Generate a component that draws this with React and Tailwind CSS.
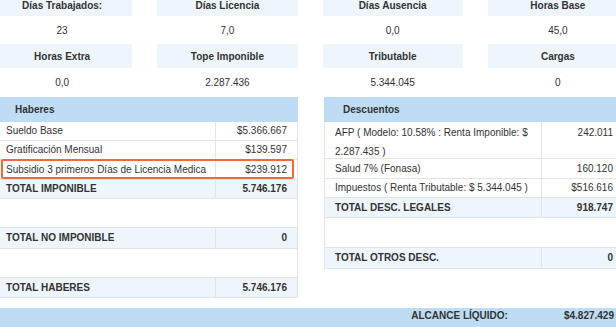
import React from "react";

const topCells = [
  [
    ["Días Trabajados:", "23"],
    ["Días Licencia", "7,0"],
    ["Días Ausencia", "0,0"],
    ["Horas Base", "45,0"],
  ],
  [
    ["Horas Extra", "0,0"],
    ["Tope Imponible", "2.287.436"],
    ["Tributable", "5.344.045"],
    ["Cargas", "0"],
  ],
];

function Row({ label, value, h, total, labelPl, children, multi }) {
  return (
    <div
      className={`relative flex border-b border-[#e4e4e4] ${h} ${
        total ? "bg-[#eef6fd] font-bold" : "bg-white"
      }`}
    >
      <div
        className={`flex-1 min-w-0 flex whitespace-nowrap ${multi ? "items-start pt-px leading-[19px]" : "items-center leading-[16px]"} ${labelPl}`}
      >
        {label}
      </div>
      <div
        className={`w-[82px] shrink-0 border-l border-[#e4e4e4] flex justify-end pr-[10px] ${multi ? "items-start pt-px leading-[19px]" : "items-center leading-[16px]"}`}
      >
        {value}
      </div>
      {children}
    </div>
  );
}

function TableHeader({ title }) {
  return (
    <div className="h-[25px] bg-[#bedcf3] flex items-center pl-[19px] font-bold">
      {title}
    </div>
  );
}

export default function App() {
  return (
    <div
      className="w-[616px] h-[327px] overflow-hidden bg-white text-[#333] text-[10px]"
      style={{ fontFamily: '"Liberation Sans", Arial, sans-serif' }}
    >
      {/* Top summary grid */}
      <div className="-ml-[8px] -mt-[6px] w-[636px]">
        {topCells.map((row, ri) => (
          <div key={ri}>
            <div
              className={`grid grid-cols-4 gap-x-[25px] ${ri === 0 ? "h-[22px]" : "h-[24px]"}`}
            >
              {row.map(([head]) => (
                <div
                  key={head}
                  className="bg-[#eef6fc] flex items-center justify-center font-bold"
                >
                  {head}
                </div>
              ))}
            </div>
            <div
              className={`grid grid-cols-4 gap-x-[25px] ${ri === 0 ? "h-[28px]" : "h-[29px]"}`}
            >
              {row.map(([head, val]) => (
                <div key={head} className="flex items-center justify-center">
                  {val}
                </div>
              ))}
            </div>
          </div>
        ))}
      </div>

      {/* Tables */}
      <div className="flex items-start gap-[26px] -ml-[4px] w-[640px]">
        {/* Haberes */}
        <div className="w-[302px] shrink-0">
          <TableHeader title="Haberes" />
          <div className="border-x border-[#e4e4e4]">
            <Row label="Sueldo Base" value="$5.366.667" h="h-[19px]" labelPl="pl-[9px]" />
            <Row label="Gratificación Mensual" value="$139.597" h="h-[19px]" labelPl="pl-[9px]" />
            <Row
              label="Subsidio 3 primeros Días de Licencia Medica"
              value="$239.912"
              h="h-[20px]"
              labelPl="pl-[9px]"
            >
              <div className="absolute left-[4px] right-[3px] -top-[1px] bottom-0 border-2 border-[#f2683a] rounded-[2px]" />
            </Row>
            <Row label="TOTAL IMPONIBLE" value="5.746.176" h="h-[19px]" total labelPl="pl-[9px]" />
            <div className="h-[29px] border-b border-[#e4e4e4]" />
            <Row label="TOTAL NO IMPONIBLE" value="0" h="h-[21px]" total labelPl="pl-[9px]" />
            <div className="h-[29px] border-b border-[#e4e4e4]" />
            <Row label="TOTAL HABERES" value="5.746.176" h="h-[20px]" total labelPl="pl-[9px]" />
          </div>
        </div>

        {/* Descuentos */}
        <div className="w-[300px] shrink-0">
          <TableHeader title="Descuentos" />
          <div className="border-x border-[#e4e4e4]">
            <Row
              label={
                <span>
                  AFP ( Modelo: 10.58% : Renta Imponible: $
                  <br />
                  2.287.435 )
                </span>
              }
              value="242.011"
              h="h-[37px]"
              multi
              labelPl="pl-[10px]"
            />
            <Row label="Salud 7% (Fonasa)" value="160.120" h="h-[20px]" labelPl="pl-[10px]" />
            <Row
              label="Impuestos ( Renta Tributable: $ 5.344.045 )"
              value="$516.616"
              h="h-[19px]"
              labelPl="pl-[10px]"
            />
            <Row label="TOTAL DESC. LEGALES" value="918.747" h="h-[20px]" total labelPl="pl-[10px]" />
            <div className="h-[30px] border-b border-[#e4e4e4]" />
            <Row label="TOTAL OTROS DESC." value="0" h="h-[21px]" total labelPl="pl-[10px]" />
          </div>
        </div>
      </div>

      {/* Bottom bar */}
      <div className="mt-[10px] h-[30px] bg-[#bedcf3] flex justify-end items-start leading-[16px] font-bold pr-[2px]">
        <span>ALCANCE LÍQUIDO:</span>
        <span className="ml-[56px]">$4.827.429</span>
      </div>
    </div>
  );
}
